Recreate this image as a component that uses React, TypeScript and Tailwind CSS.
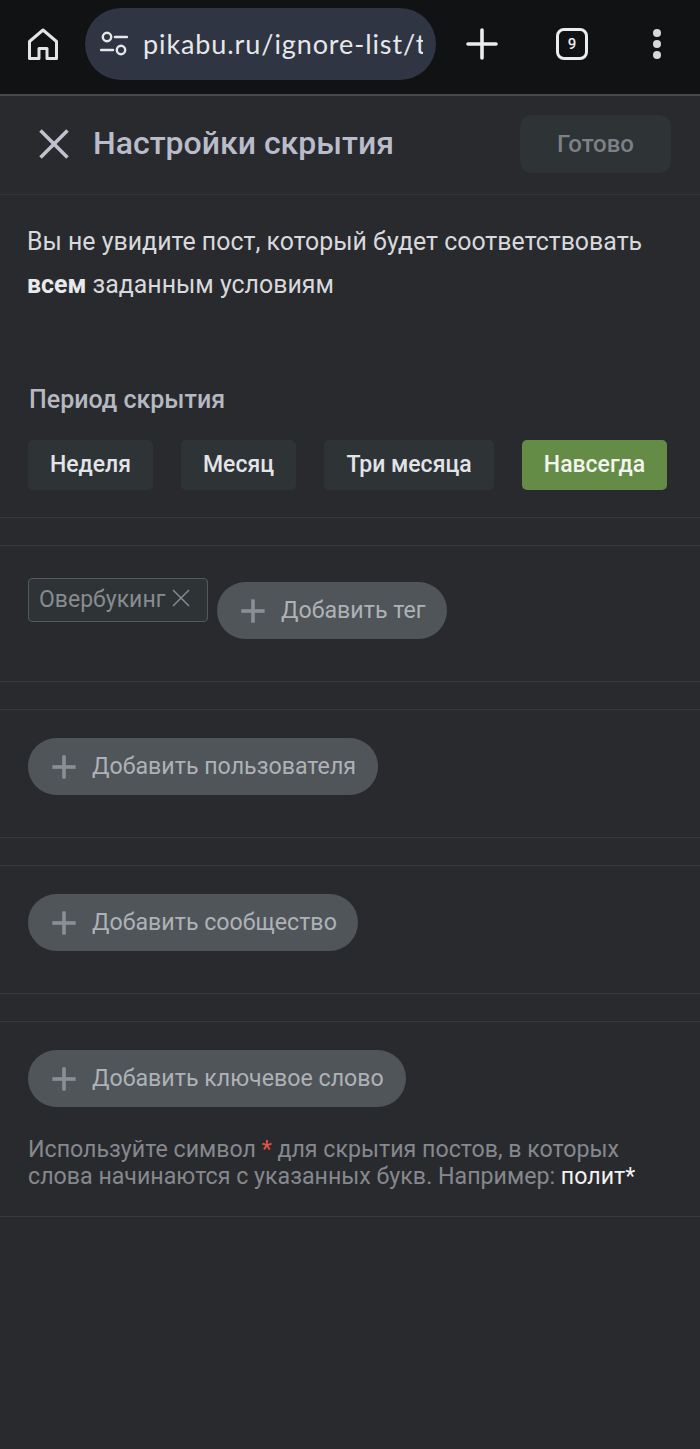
import { X, Plus } from 'lucide-react';

const periods = [
  { label: 'Неделя', width: 'w-[125px]', active: false },
  { label: 'Месяц', width: 'w-[115px]', active: false },
  { label: 'Три месяца', width: 'w-[170px]', active: false },
  { label: 'Навсегда', width: 'w-[145px]', active: true },
];

function AddButton({ label, className }: { label: string; className: string }) {
  return (
    <button className={`flex h-[57px] items-center rounded-full bg-[#50555a] pl-[16px] text-[23.2px] text-[#aeb2b6] ${className}`}>
      <Plus className="mr-[9px] h-[40px] w-[40px] text-[#8a8f94]" strokeWidth={2.2} strokeLinecap="butt" />
      <span className="-ml-[1px]">{label}</span>
    </button>
  );
}

function BrowserBar() {
  return (
    <div className="flex h-[96px] items-start border-b-2 border-[#46484a] bg-[#111213]">
      <div className="flex h-[88px] w-[85px] items-center justify-center">
        <svg viewBox="0 0 30 32" className="h-[32px] w-[30px] text-[#e4e4e4]" fill="none" stroke="currentColor" strokeWidth="3">
          <path d="M1.5 13.5 15 2l13.5 11.5V30.5H19V20.5h-8V30.5H1.5z" strokeLinejoin="round" />
        </svg>
      </div>
      <div className="mt-[8px] flex h-[72px] w-[351px] items-center overflow-hidden rounded-full bg-[#2f3542] pl-[15px] pr-[13px]">
        <svg viewBox="0 0 28 28" className="h-[28px] w-[28px] shrink-0 text-[#e6e7ea]" fill="none" stroke="currentColor" strokeWidth="2.4">
          <circle cx="7" cy="7" r="4.2" />
          <path d="M15 7h12M1 20h12" strokeLinecap="round" />
          <circle cx="21" cy="20" r="4.2" />
        </svg>
        <div className="ml-[15px] overflow-hidden">
          <span className="whitespace-nowrap font-['Lato',sans-serif] text-[27px] tracking-[0.9px] text-[#e6e7ea]">pikabu.ru/ignore-list/t</span>
        </div>
      </div>
      <div className="flex h-[88px] flex-1 items-center">
        <Plus className="ml-[22px] h-[48px] w-[48px] text-[#ececec]" strokeWidth={1.8} />
        <div className="ml-[50px] flex h-[32px] w-[32px] items-center justify-center rounded-[8px] border-[3px] border-[#ececec] font-['Roboto',sans-serif] text-[15px] font-medium text-[#ececec]">
          9
        </div>
        <div className="ml-[65px] flex flex-col gap-[3px]">
          <span className="h-[8px] w-[8px] rounded-full bg-[#d8d8d8]" />
          <span className="h-[8px] w-[8px] rounded-full bg-[#d8d8d8]" />
          <span className="h-[8px] w-[8px] rounded-full bg-[#d8d8d8]" />
        </div>
      </div>
    </div>
  );
}

export default function App() {
  return (
    <div className="h-[1449px] w-[700px] overflow-hidden bg-[#292a2e] font-['Roboto',sans-serif]">
      <BrowserBar />

      {/* Header */}
      <div className="flex h-[99px] items-start border-b border-[#323438] pl-[27px] pr-[29px]">
        <div className="flex h-[95px] items-center">
          <X className="h-[54px] w-[54px] text-[#c0c2cf]" strokeWidth={1.6} strokeLinecap="butt" />
          <h1 className="ml-[12px] -translate-y-[1px] text-[32px] font-medium text-[#b9bccb]">Настройки скрытия</h1>
        </div>
        <button className="ml-auto mt-[19px] h-[58px] w-[151px] rounded-[12px] bg-[#2e3336] text-[24px] font-medium text-[#7d8186]">
          Готово
        </button>
      </div>

      <p className="mt-[25px] px-[27px] text-[24.9px] leading-[43px] text-[#d8d9dc]">
        Вы не увидите пост, который будет соответствовать
        <br />
        <b className="font-bold text-[#e8e9ea]">всем</b> заданным условиям
      </p>

      {/* Period */}
      <div className="border-b border-[#37393d] px-[28px] pb-[27px]">
        <h2 className="mt-[78px] pl-[1px] text-[25px] font-medium leading-[32px] text-[#b5b8c0]">Период скрытия</h2>
        <div className="mt-[24px] flex justify-between pr-[5px]">
          {periods.map((p) => (
            <button
              key={p.label}
              className={`h-[50px] rounded-[5px] text-[23px] font-medium ${p.width} ${
                p.active ? 'bg-[#648c47] text-[#f2f5ee]' : 'bg-[#2e3336] text-[#e2e4e8]'
              }`}
            >
              {p.label}
            </button>
          ))}
        </div>
      </div>

      {/* Tags */}
      <div className="mt-[27px] h-[137px] border-y border-[#37393d] px-[28px] pt-[32px]">
        <div className="flex items-start">
          <div className="flex h-[44px] w-[180px] items-center rounded-[4px] border border-[#55585c] bg-[#2e3336] pl-[10px] text-[23px] text-[#888c91]">
            Овербукинг
            <X className="h-[32px] w-[32px] shrink-0 -translate-y-[2px] text-[#888c91]" strokeWidth={1} strokeLinecap="butt" />
          </div>
          <AddButton label="Добавить тег" className="ml-[9px] mt-[4px] w-[230px]" />
        </div>
      </div>

      <div className="mt-[27px] h-[129px] border-y border-[#37393d] px-[28px] pt-[28px]">
        <AddButton label="Добавить пользователя" className="w-[350px]" />
      </div>

      <div className="mt-[27px] h-[129px] border-y border-[#37393d] px-[28px] pt-[28px]">
        <AddButton label="Добавить сообщество" className="w-[330px]" />
      </div>

      <div className="mt-[27px] h-[196px] border-y border-[#37393d] px-[28px] pt-[28px]">
        <AddButton label="Добавить ключевое слово" className="w-[378px]" />
        <p className="mt-[29px] whitespace-nowrap text-[23.2px] leading-[27px] text-[#85888d]">
          Используйте символ <span className="text-[#e8553f]">*</span> для скрытия постов, в которых
          <br />
          слова начинаются с указанных букв. Например: <span className="text-[#f2f2f2]">полит*</span>
        </p>
      </div>
    </div>
  );
}
